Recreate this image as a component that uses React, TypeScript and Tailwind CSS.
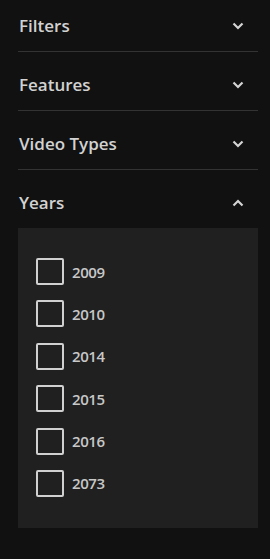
import { useState } from 'react';

const sections = ['Filters', 'Features', 'Video Types', 'Years'];
const years = ['2009', '2010', '2014', '2015', '2016', '2073'];

function Chevron({ up }: { up?: boolean }) {
  return (
    <svg width="12" height="8" viewBox="0 0 12 8" className="text-[#d4d4d4]">
      <polyline
        points={up ? '1.5,6.5 6,2 10.5,6.5' : '1.5,1.5 6,6 10.5,1.5'}
        fill="none"
        stroke="currentColor"
        strokeWidth="2.2"
      />
    </svg>
  );
}

export default function App() {
  const [open, setOpen] = useState('Years');
  const [checked, setChecked] = useState<string[]>([]);

  const toggle = (y: string) =>
    setChecked((c) => (c.includes(y) ? c.filter((v) => v !== y) : [...c, y]));

  return (
    <div className="min-h-screen bg-[#111111] pl-[18px] pr-[12px] font-['Open_Sans',sans-serif]">
      {sections.map((name, i) => {
        const isOpen = open === name;
        return (
          <div key={name} className={isOpen ? '' : 'border-b border-[#333333]'}>
            <button
              onClick={() => setOpen(isOpen ? '' : name)}
              className={`w-full flex items-center justify-between pl-px pr-[14px] pb-[15px] ${i === 0 ? 'pt-[16px]' : 'pt-[23px]'}`}
            >
              <span className="text-[17px] leading-[20px] font-semibold text-[#d2d2d2]">{name}</span>
              <Chevron up={isOpen} />
            </button>
            {isOpen && name === 'Years' && (
              <div className="bg-[#202020] pl-[18px] pt-[30px] pb-[31px] flex flex-col gap-[15.4px]">
                {years.map((y) => (
                  <label key={y} className="flex items-center gap-[8px] cursor-pointer">
                    <span
                      onClick={() => toggle(y)}
                      className="w-[28px] h-[27px] border-2 border-[#d0d0d0] rounded-[2px] flex items-center justify-center"
                    >
                      {checked.includes(y) && <span className="w-[14px] h-[14px] bg-[#d0d0d0]" />}
                    </span>
                    <span className="text-[15px] tracking-[-0.4px] font-semibold text-[#c8c8c8] leading-[20px]">{y}</span>
                  </label>
                ))}
              </div>
            )}
          </div>
        );
      })}
    </div>
  );
}
